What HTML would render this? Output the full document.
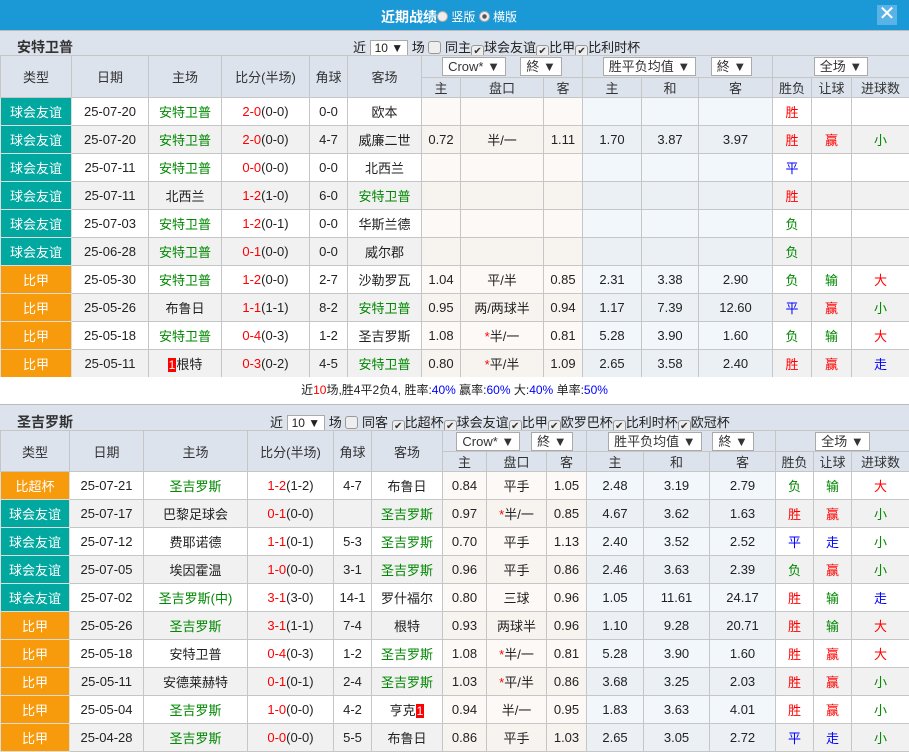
<!DOCTYPE html>
<html><head><meta charset="utf-8"><style>
*{margin:0;padding:0;box-sizing:border-box}
body{width:909px;height:751px;overflow:hidden;background:#fff;font-family:"Liberation Sans","Noto Sans CJK SC",sans-serif;font-size:13px;color:#222;position:relative}
.top{position:absolute;left:0;top:0;width:909px;height:30px;background:#1b98d6;color:#fff}
.top .t{position:absolute;left:381px;top:7px;font-weight:bold;font-size:14px}
.top .rr{position:absolute;top:8px;font-size:12px;color:#fff}
.rad{display:inline-block;width:11px;height:11px;border-radius:50%;background:#eee;border:1px solid #aaa;vertical-align:-1px}
.rad.on{background:radial-gradient(#555 30%,#eee 40%)}
.x{position:absolute;left:877px;top:5px;width:20px;height:20px;background:#5ab3e6;color:#fff;font-size:20px;line-height:19px;text-align:center}
.sec{position:absolute;left:0;width:909px;background:#dce3ed;border-top:1px solid #bbb}
.sec .n{position:absolute;left:17px;top:6px;font-weight:bold;font-size:14px;color:#333}
.sec .f{position:absolute;top:7px;font-size:13px;white-space:nowrap}
.sel{display:inline-block;border:1px solid #aaa;background:#fff;padding:0 4px;height:17px;line-height:15px;font-size:12px;vertical-align:middle}
.cb{display:inline-block;width:13px;height:13px;border:1px solid #999;border-radius:3px;background:#eee;vertical-align:-2px;font-size:10px;line-height:11px;text-align:center;color:#333}
table{position:absolute;left:0;border-collapse:collapse;table-layout:fixed;width:909px}
td{border:1px solid #c6c6c6;text-align:center;white-space:nowrap;overflow:hidden;padding:0}
thead td{background:#dce3ed;color:#333;font-size:13px}
tbody tr{height:28px}
td.ty{color:#fff;font-size:13px;border-color:#ddd}
.fr{background:#00a8a0}.bj{background:#f79a0c}
tr.e td{background:#f1f1f1}
tr.o td.a{background:#fdf9f6}tr.o td.b{background:#f1f7fb}
tr.e td.a{background:#f7f3ef}tr.e td.b{background:#eaf0f4}
tr td.ty.fr{background:#00a8a0}tr td.ty.bj{background:#f79a0c}
.g{color:#080}.r{color:#f00}.u{color:#00f}
.k{background:#f00;color:#fff;padding:0 1px;font-size:12px}
.sum{position:absolute;left:0;top:377px;width:909px;height:27px;line-height:27px;text-align:center;font-size:12px;background:#fff}
.hsel{display:inline-block;border:1px solid #aaa;background:#fff;height:19px;line-height:17px;padding:0 5px;font-size:13px}
</style></head><body>
<div class="top"><span class="t">近期战绩</span><span class="rr" style="left:437px"><span class="rad"></span> 竖版 <span class="rad on"></span> 横版</span><div class="x">✕</div></div>

<div class="sec" style="top:30px;height:25px"><span class="n">安特卫普</span>
<span class="f" style="left:353px;top:6px">近 <span class="sel">10 ▼</span> 场 <span class="cb"></span> 同主<span class="cb">✔</span>球会友谊<span class="cb">✔</span>比甲<span class="cb">✔</span>比利时杯</span></div>

<table style="top:55px">
<colgroup><col style="width:71px"><col style="width:77px"><col style="width:73px"><col style="width:88px"><col style="width:38px"><col style="width:74px"><col style="width:39px"><col style="width:83px"><col style="width:39px"><col style="width:59px"><col style="width:57px"><col style="width:74px"><col style="width:39px"><col style="width:40px"><col style="width:58px"></colgroup>
<thead><tr style="height:22px"><td rowspan="2">类型</td><td rowspan="2">日期</td><td rowspan="2">主场</td><td rowspan="2">比分(半场)</td><td rowspan="2">角球</td><td rowspan="2">客场</td><td colspan="3"><span class="hsel">Crow* ▼</span>&nbsp;&nbsp;&nbsp;&nbsp;<span class="hsel">終 ▼</span></td><td colspan="3"><span class="hsel">胜平负均值 ▼</span>&nbsp;&nbsp;&nbsp;&nbsp;<span class="hsel">終 ▼</span></td><td colspan="3"><span class="hsel">全场 ▼</span></td></tr>
<tr style="height:20px"><td>主</td><td>盘口</td><td>客</td><td>主</td><td>和</td><td>客</td><td>胜负</td><td>让球</td><td>进球数</td></tr></thead>
<tbody>
<tr class="o"><td class="ty fr">球会友谊</td><td>25-07-20</td><td class="g">安特卫普</td><td><span class="r">2-0</span>(0-0)</td><td>0-0</td><td>欧本</td><td class="a"></td><td class="a"></td><td class="a"></td><td class="b"></td><td class="b"></td><td class="b"></td><td class="r">胜</td><td></td><td></td></tr>
<tr class="e"><td class="ty fr">球会友谊</td><td>25-07-20</td><td class="g">安特卫普</td><td><span class="r">2-0</span>(0-0)</td><td>4-7</td><td>威廉二世</td><td class="a">0.72</td><td class="a">半/一</td><td class="a">1.11</td><td class="b">1.70</td><td class="b">3.87</td><td class="b">3.97</td><td class="r">胜</td><td class="r">赢</td><td class="g">小</td></tr>
<tr class="o"><td class="ty fr">球会友谊</td><td>25-07-11</td><td class="g">安特卫普</td><td><span class="r">0-0</span>(0-0)</td><td>0-0</td><td>北西兰</td><td class="a"></td><td class="a"></td><td class="a"></td><td class="b"></td><td class="b"></td><td class="b"></td><td class="u">平</td><td></td><td></td></tr>
<tr class="e"><td class="ty fr">球会友谊</td><td>25-07-11</td><td>北西兰</td><td><span class="r">1-2</span>(1-0)</td><td>6-0</td><td class="g">安特卫普</td><td class="a"></td><td class="a"></td><td class="a"></td><td class="b"></td><td class="b"></td><td class="b"></td><td class="r">胜</td><td></td><td></td></tr>
<tr class="o"><td class="ty fr">球会友谊</td><td>25-07-03</td><td class="g">安特卫普</td><td><span class="r">1-2</span>(0-1)</td><td>0-0</td><td>华斯兰德</td><td class="a"></td><td class="a"></td><td class="a"></td><td class="b"></td><td class="b"></td><td class="b"></td><td class="g">负</td><td></td><td></td></tr>
<tr class="e"><td class="ty fr">球会友谊</td><td>25-06-28</td><td class="g">安特卫普</td><td><span class="r">0-1</span>(0-0)</td><td>0-0</td><td>威尔郡</td><td class="a"></td><td class="a"></td><td class="a"></td><td class="b"></td><td class="b"></td><td class="b"></td><td class="g">负</td><td></td><td></td></tr>
<tr class="o"><td class="ty bj">比甲</td><td>25-05-30</td><td class="g">安特卫普</td><td><span class="r">1-2</span>(0-0)</td><td>2-7</td><td>沙勒罗瓦</td><td class="a">1.04</td><td class="a">平/半</td><td class="a">0.85</td><td class="b">2.31</td><td class="b">3.38</td><td class="b">2.90</td><td class="g">负</td><td class="g">输</td><td class="r">大</td></tr>
<tr class="e"><td class="ty bj">比甲</td><td>25-05-26</td><td>布鲁日</td><td><span class="r">1-1</span>(1-1)</td><td>8-2</td><td class="g">安特卫普</td><td class="a">0.95</td><td class="a">两/两球半</td><td class="a">0.94</td><td class="b">1.17</td><td class="b">7.39</td><td class="b">12.60</td><td class="u">平</td><td class="r">赢</td><td class="g">小</td></tr>
<tr class="o"><td class="ty bj">比甲</td><td>25-05-18</td><td class="g">安特卫普</td><td><span class="r">0-4</span>(0-3)</td><td>1-2</td><td>圣吉罗斯</td><td class="a">1.08</td><td class="a"><span class="r">*</span>半/一</td><td class="a">0.81</td><td class="b">5.28</td><td class="b">3.90</td><td class="b">1.60</td><td class="g">负</td><td class="g">输</td><td class="r">大</td></tr>
<tr class="e"><td class="ty bj">比甲</td><td>25-05-11</td><td><span class="k">1</span>根特</td><td><span class="r">0-3</span>(0-2)</td><td>4-5</td><td class="g">安特卫普</td><td class="a">0.80</td><td class="a"><span class="r">*</span>平/半</td><td class="a">1.09</td><td class="b">2.65</td><td class="b">3.58</td><td class="b">2.40</td><td class="r">胜</td><td class="r">赢</td><td class="u">走</td></tr>
</tbody></table>

<div class="sum">近<span class="r">10</span>场,胜4平2负4, 胜率:<span class="u">40%</span> 赢率:<span class="u">60%</span> 大:<span class="u">40%</span> 单率:<span class="u">50%</span></div>

<div class="sec" style="top:404px;height:26px"><span class="n" style="top:7px">圣吉罗斯</span>
<span class="f" style="left:270px;top:7px">近 <span class="sel">10 ▼</span> 场 <span class="cb"></span> 同客 <span class="cb">✔</span>比超杯<span class="cb">✔</span>球会友谊<span class="cb">✔</span>比甲<span class="cb">✔</span>欧罗巴杯<span class="cb">✔</span>比利时杯<span class="cb">✔</span>欧冠杯</span></div>

<table style="top:430px">
<colgroup><col style="width:69px"><col style="width:74px"><col style="width:104px"><col style="width:86px"><col style="width:38px"><col style="width:71px"><col style="width:44px"><col style="width:60px"><col style="width:40px"><col style="width:57px"><col style="width:66px"><col style="width:66px"><col style="width:38px"><col style="width:38px"><col style="width:58px"></colgroup>
<thead><tr style="height:21px"><td rowspan="2">类型</td><td rowspan="2">日期</td><td rowspan="2">主场</td><td rowspan="2">比分(半场)</td><td rowspan="2">角球</td><td rowspan="2">客场</td><td colspan="3"><span class="hsel">Crow* ▼</span>&nbsp;&nbsp;&nbsp;<span class="hsel">終 ▼</span></td><td colspan="3"><span class="hsel">胜平负均值 ▼</span>&nbsp;&nbsp;&nbsp;<span class="hsel">終 ▼</span></td><td colspan="3"><span class="hsel">全场 ▼</span></td></tr>
<tr style="height:20px"><td>主</td><td>盘口</td><td>客</td><td>主</td><td>和</td><td>客</td><td>胜负</td><td>让球</td><td>进球数</td></tr></thead>
<tbody>
<tr class="o"><td class="ty bj">比超杯</td><td>25-07-21</td><td class="g">圣吉罗斯</td><td><span class="r">1-2</span>(1-2)</td><td>4-7</td><td>布鲁日</td><td class="a">0.84</td><td class="a">平手</td><td class="a">1.05</td><td class="b">2.48</td><td class="b">3.19</td><td class="b">2.79</td><td class="g">负</td><td class="g">输</td><td class="r">大</td></tr>
<tr class="e"><td class="ty fr">球会友谊</td><td>25-07-17</td><td>巴黎足球会</td><td><span class="r">0-1</span>(0-0)</td><td></td><td class="g">圣吉罗斯</td><td class="a">0.97</td><td class="a"><span class="r">*</span>半/一</td><td class="a">0.85</td><td class="b">4.67</td><td class="b">3.62</td><td class="b">1.63</td><td class="r">胜</td><td class="r">赢</td><td class="g">小</td></tr>
<tr class="o"><td class="ty fr">球会友谊</td><td>25-07-12</td><td>费耶诺德</td><td><span class="r">1-1</span>(0-1)</td><td>5-3</td><td class="g">圣吉罗斯</td><td class="a">0.70</td><td class="a">平手</td><td class="a">1.13</td><td class="b">2.40</td><td class="b">3.52</td><td class="b">2.52</td><td class="u">平</td><td class="u">走</td><td class="g">小</td></tr>
<tr class="e"><td class="ty fr">球会友谊</td><td>25-07-05</td><td>埃因霍温</td><td><span class="r">1-0</span>(0-0)</td><td>3-1</td><td class="g">圣吉罗斯</td><td class="a">0.96</td><td class="a">平手</td><td class="a">0.86</td><td class="b">2.46</td><td class="b">3.63</td><td class="b">2.39</td><td class="g">负</td><td class="r">赢</td><td class="g">小</td></tr>
<tr class="o"><td class="ty fr">球会友谊</td><td>25-07-02</td><td class="g">圣吉罗斯(中)</td><td><span class="r">3-1</span>(3-0)</td><td>14-1</td><td>罗什福尔</td><td class="a">0.80</td><td class="a">三球</td><td class="a">0.96</td><td class="b">1.05</td><td class="b">11.61</td><td class="b">24.17</td><td class="r">胜</td><td class="g">输</td><td class="u">走</td></tr>
<tr class="e"><td class="ty bj">比甲</td><td>25-05-26</td><td class="g">圣吉罗斯</td><td><span class="r">3-1</span>(1-1)</td><td>7-4</td><td>根特</td><td class="a">0.93</td><td class="a">两球半</td><td class="a">0.96</td><td class="b">1.10</td><td class="b">9.28</td><td class="b">20.71</td><td class="r">胜</td><td class="g">输</td><td class="r">大</td></tr>
<tr class="o"><td class="ty bj">比甲</td><td>25-05-18</td><td>安特卫普</td><td><span class="r">0-4</span>(0-3)</td><td>1-2</td><td class="g">圣吉罗斯</td><td class="a">1.08</td><td class="a"><span class="r">*</span>半/一</td><td class="a">0.81</td><td class="b">5.28</td><td class="b">3.90</td><td class="b">1.60</td><td class="r">胜</td><td class="r">赢</td><td class="r">大</td></tr>
<tr class="e"><td class="ty bj">比甲</td><td>25-05-11</td><td>安德莱赫特</td><td><span class="r">0-1</span>(0-1)</td><td>2-4</td><td class="g">圣吉罗斯</td><td class="a">1.03</td><td class="a"><span class="r">*</span>平/半</td><td class="a">0.86</td><td class="b">3.68</td><td class="b">3.25</td><td class="b">2.03</td><td class="r">胜</td><td class="r">赢</td><td class="g">小</td></tr>
<tr class="o"><td class="ty bj">比甲</td><td>25-05-04</td><td class="g">圣吉罗斯</td><td><span class="r">1-0</span>(0-0)</td><td>4-2</td><td>亨克<span class="k">1</span></td><td class="a">0.94</td><td class="a">半/一</td><td class="a">0.95</td><td class="b">1.83</td><td class="b">3.63</td><td class="b">4.01</td><td class="r">胜</td><td class="r">赢</td><td class="g">小</td></tr>
<tr class="e"><td class="ty bj">比甲</td><td>25-04-28</td><td class="g">圣吉罗斯</td><td><span class="r">0-0</span>(0-0)</td><td>5-5</td><td>布鲁日</td><td class="a">0.86</td><td class="a">平手</td><td class="a">1.03</td><td class="b">2.65</td><td class="b">3.05</td><td class="b">2.72</td><td class="u">平</td><td class="u">走</td><td class="g">小</td></tr>
</tbody></table>
</body></html>
